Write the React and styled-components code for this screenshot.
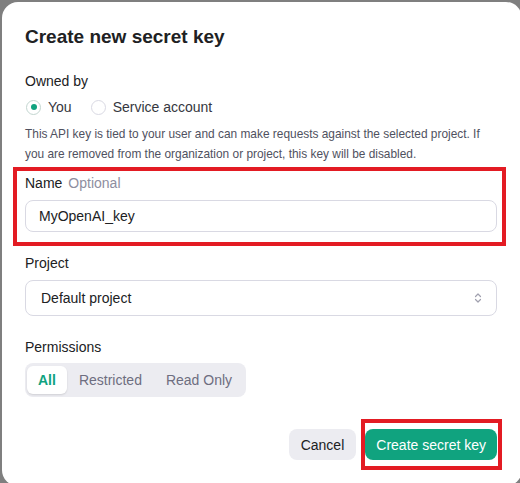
import { useState } from "react";
import styled, { createGlobalStyle } from "styled-components";

const GlobalStyle = createGlobalStyle`
  html, body {
    margin: 0;
    padding: 0;
    background: #7f7f7f;
    overflow: hidden;
  }
  body {
    font-family: "Liberation Sans", Arial, sans-serif;
    color: #202123;
  }
`;

const Modal = styled.div`
  box-sizing: border-box;
  margin: 2px 0 0 2px;
  width: 520px;
  height: 484px;
  background: #fff;
  border-radius: 16px;
  padding: 23px 25px 0 23px;
  display: flex;
  flex-direction: column;
`;

const Title = styled.h2`
  margin: 0;
  font-size: 19px;
  line-height: 24px;
  font-weight: 700;
  color: #202123;
`;

const Label = styled.div`
  font-size: 14px;
  line-height: 20px;
  color: #202123;
  margin-top: ${(p) => p.$mt || 0}px;
`;

const Optional = styled.span`
  color: #8e8ea0;
  margin-left: 6px;
`;

const RadioRow = styled.div`
  display: flex;
  align-items: center;
  gap: 18px;
  margin-top: 6px;
  height: 20px;
`;

const RadioOption = styled.label`
  display: flex;
  align-items: center;
  gap: 7px;
  font-size: 14px;
  line-height: 20px;
  color: #353740;
  cursor: pointer;
`;

const RadioCircle = styled.span`
  box-sizing: border-box;
  width: 15px;
  height: 15px;
  margin-left: 1px;
  border-radius: 50%;
  border: 1px solid ${(p) => (p.$checked ? "#c3d6d0" : "#d9d9e3")};
  display: flex;
  align-items: center;
  justify-content: center;

  &::after {
    content: "";
    width: 6px;
    height: 6px;
    border-radius: 50%;
    background: ${(p) => (p.$checked ? "#10a37f" : "transparent")};
  }
`;

const Description = styled.p`
  margin: 7px 0 0;
  font-size: 11.9px;
  line-height: 20px;
  color: #4f5160;
`;

const Highlight = styled.div`
  position: relative;

  &::before {
    content: "";
    position: absolute;
    top: ${(p) => p.$top}px;
    left: ${(p) => p.$left}px;
    right: ${(p) => p.$right}px;
    bottom: ${(p) => p.$bottom}px;
    border: 4px solid #e31b23;
    pointer-events: none;
  }
`;

const NameGroup = styled(Highlight)`
  margin-top: 9px;
`;

const TextInput = styled.input`
  box-sizing: border-box;
  display: block;
  width: 100%;
  height: 32px;
  margin-top: 7px;
  padding: 0 13px;
  border: 1px solid #d9d9e3;
  border-radius: 8px;
  font-family: inherit;
  font-size: 14px;
  color: #202123;
  outline: none;
`;

const Select = styled.div`
  box-sizing: border-box;
  height: 36px;
  margin-top: 7px;
  padding: 0 14px 0 15px;
  border: 1px solid #d9d9e3;
  border-radius: 8px;
  display: flex;
  align-items: center;
  justify-content: space-between;
  font-size: 14px;
  color: #202123;
`;

const Segmented = styled.div`
  align-self: flex-start;
  display: flex;
  margin-top: 6px;
  padding: 3px 2px;
  background: #ececf1;
  border-radius: 8px;
`;

const Segment = styled.button`
  height: 28px;
  padding: 0 ${(p) => (p.$active ? 11 : 12)}px;
  border: none;
  border-radius: 6px;
  font-family: inherit;
  font-size: 14px;
  font-weight: ${(p) => (p.$active ? 700 : 400)};
  color: ${(p) => (p.$active ? "#10a37f" : "#6e6e80")};
  background: ${(p) => (p.$active ? "#fff" : "transparent")};
  box-shadow: ${(p) => (p.$active ? "0 1px 2px rgba(0,0,0,0.12)" : "none")};
  cursor: pointer;
`;

const Footer = styled.div`
  display: flex;
  justify-content: flex-end;
  align-items: center;
  gap: 9px;
  margin-top: 32px;
`;

const Button = styled.button`
  height: 31px;
  padding: 0 ${(p) => (p.$primary ? 11 : 12)}px;
  border: none;
  border-radius: 8px;
  font-family: inherit;
  font-size: 14px;
  color: ${(p) => (p.$primary ? "#fff" : "#202123")};
  background: ${(p) => (p.$primary ? "#10a37f" : "#ececf1")};
  cursor: pointer;
`;

const Chevrons = () => (
  <svg width="8" height="12" viewBox="0 0 8 12" fill="none" stroke="#a0a0ae" strokeWidth="1.2" strokeLinecap="round" strokeLinejoin="round">
    <path d="M1.5 4.5 L4 2 L6.5 4.5" />
    <path d="M1.5 7.5 L4 10 L6.5 7.5" />
  </svg>
);

export default function App() {
  const [owner, setOwner] = useState("you");
  const [perm, setPerm] = useState("All");

  return (
    <>
      <GlobalStyle />
      <Modal>
        <Title>Create new secret key</Title>

        <Label $mt={22}>Owned by</Label>
        <RadioRow>
          <RadioOption onClick={() => setOwner("you")}>
            <RadioCircle $checked={owner === "you"} />
            You
          </RadioOption>
          <RadioOption onClick={() => setOwner("service")}>
            <RadioCircle $checked={owner === "service"} />
            Service account
          </RadioOption>
        </RadioRow>
        <Description>
          This API key is tied to your user and can make requests against the selected project. If
          you are removed from the organization or project, this key will be disabled.
        </Description>

        <NameGroup $top={-6} $left={-12} $right={-9} $bottom={-14}>
          <Label>
            Name<Optional>Optional</Optional>
          </Label>
          <TextInput defaultValue="MyOpenAI_key" />
        </NameGroup>

        <Label $mt={21}>Project</Label>
        <Select>
          Default project
          <Chevrons />
        </Select>

        <Label $mt={21}>Permissions</Label>
        <Segmented>
          {["All", "Restricted", "Read Only"].map((p) => (
            <Segment key={p} $active={perm === p} onClick={() => setPerm(p)}>
              {p}
            </Segment>
          ))}
        </Segmented>

        <Footer>
          <Button>Cancel</Button>
          <Highlight $top={-10} $left={-4} $right={-5} $bottom={-10}>
            <Button $primary>Create secret key</Button>
          </Highlight>
        </Footer>
      </Modal>
    </>
  );
}
